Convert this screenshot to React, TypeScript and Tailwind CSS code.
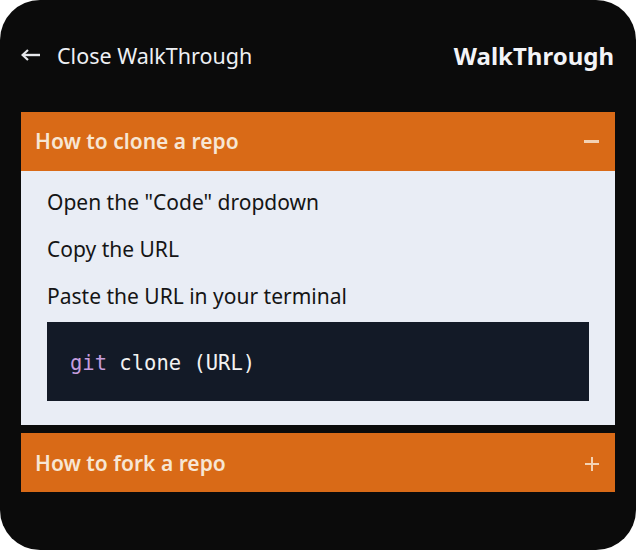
import React from "react";

export default function App() {
  return (
    <div className="w-[636px] h-[550px] bg-white">
      <div
        className="w-[636px] h-[550px] bg-[#0b0b0b] rounded-[40px] px-[21px] pt-[38px] flex flex-col"
        style={{ fontFamily: '"Noto Sans", "Open Sans", sans-serif' }}
      >
        <div className="flex items-center justify-between h-[36px] pr-[1px]">
          <div className="flex items-center text-[#eef0f4] text-[21.5px]">
            <svg width="36" height="20" viewBox="0 0 36 20" className="-mt-[3px]">
              <path d="M2 10 H19" stroke="#e6e8ec" strokeWidth="2.4" fill="none" />
              <path d="M7 5 L1.5 10 L7 15" stroke="#e6e8ec" strokeWidth="2.2" fill="none" strokeLinejoin="miter" />
            </svg>
            <span>Close WalkThrough</span>
          </div>
          <div className="text-[#f3f4f7] text-[24px] font-bold">WalkThrough</div>
        </div>
        <div className="mt-[38px] flex flex-col">
          <div className="h-[59px] bg-[#d96a17] flex items-center justify-between px-[14px]">
            <span className="text-[#f7e6d4] text-[21px] font-semibold">How to clone a repo</span>
            <span className="w-[15px] h-[3px] bg-[#f3d2b4] mr-[2px]" />
          </div>
          <div className="bg-[#e9edf5] px-[26px] pt-[16px] pb-[24px] text-[#151515] text-[21px] flex flex-col">
            <div className="h-[31px] flex items-center">Open the "Code" dropdown</div>
            <div className="h-[31px] flex items-center mt-[16px]">Copy the URL</div>
            <div className="h-[31px] flex items-center mt-[16px]">Paste the URL in your terminal</div>
            <div
              className="mt-[10px] h-[79px] bg-[#131a27] flex items-center px-[23px] pt-[3px] text-[20.5px] text-[#f2f2f2]"
              style={{ fontFamily: '"DejaVu Sans Mono", monospace' }}
            >
              <span className="text-[#c59ddd]">git</span>
              <span>&nbsp;clone (URL)</span>
            </div>
          </div>
          <div className="mt-[8px] h-[59px] bg-[#d96a17] flex items-center justify-between px-[14px] pt-[2px]">
            <span className="text-[#f7e6d4] text-[21px] font-semibold">How to fork a repo</span>
            <span className="relative w-[14px] h-[14px] mr-[2px]">
              <span className="absolute left-0 top-[6px] w-[14px] h-[2px] bg-[#f3d2b4]" />
              <span className="absolute top-0 left-[6px] h-[14px] w-[2px] bg-[#f3d2b4]" />
            </span>
          </div>
        </div>
      </div>
    </div>
  );
}
